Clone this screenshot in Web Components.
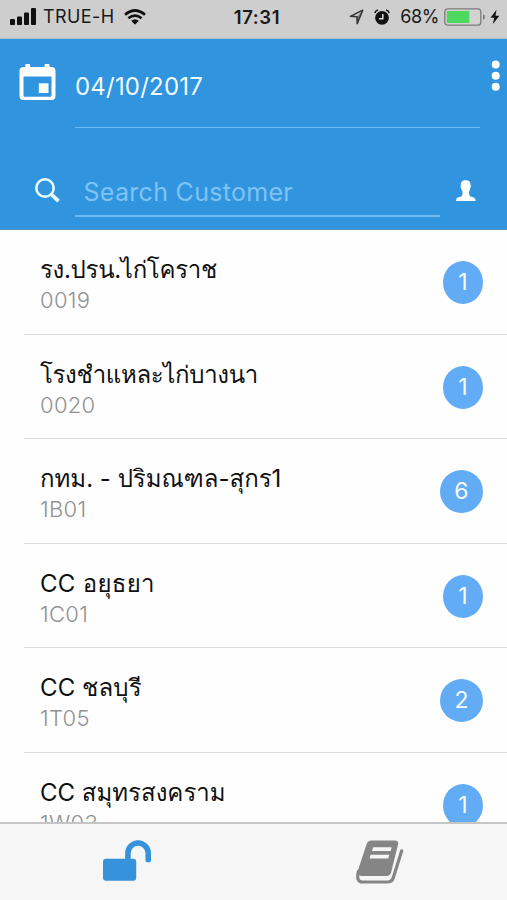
<!DOCTYPE html>
<html lang="th">
<head>
<meta charset="utf-8">
<meta name="viewport" content="width=device-width, initial-scale=1">
<title>Customers</title>
<style>
   body {
      margin: 0;
      background: #fefefe;
      font-family: Inter, Loma, Garuda, Waree, "Noto Sans Thai Looped", "Noto Sans Thai", "Noto Sans", "Liberation Sans", sans-serif;
   }
</style>
</head>
<body>
<customer-app>
   <status-bar slot="status" carrier="TRUE-H" time="17:31" battery="68"></status-bar>
   <search-header slot="header" date="04/10/2017" placeholder="Search Customer"></search-header>
   <customer-row code="0019" count="1" spacing="-.3">รง.ปรน.ไก่โคราช</customer-row>
   <customer-row code="0020" count="1" spacing="-.35">โรงชำแหละไก่บางนา</customer-row>
   <customer-row code="1B01" count="6" spacing="0">กทม. - ปริมณฑล-สุกร1</customer-row>
   <customer-row code="1C01" count="1" spacing=".3">CC อยุธยา</customer-row>
   <customer-row code="1T05" count="2" spacing=".1">CC ชลบุรี</customer-row>
   <customer-row code="1W03" count="1" spacing="0">CC สมุทรสงคราม</customer-row>
   <tab-bar slot="tabs"></tab-bar>
</customer-app>

<script>
class CustomerApp extends HTMLElement {
   constructor () {
      super();
      this.attachShadow( { mode: 'open' } )
   }

   connectedCallback () {
      this.shadowRoot.innerHTML = `
         <style>
            :host {
               display: flex;
               flex-direction: column;
               height: 900px;
               overflow: hidden;
            }

            .list {
               flex: 1;
               min-height: 0;
               overflow: hidden;
            }
         </style>
         <slot name="status"></slot>
         <slot name="header"></slot>
         <main class="list"><slot></slot></main>
         <slot name="tabs"></slot>
      `;
   }
}

class StatusBar extends HTMLElement {
   constructor () {
      super();
      this.attachShadow( { mode: 'open' } )
   }

   connectedCallback () {
      this.shadowRoot.innerHTML = `
         <style>
            :host {
               display: grid;
               grid-template-columns: 1fr auto 1fr;
               align-items: center;
               box-sizing: border-box;
               height: 39px;
               padding: 0 7px 5px 10px;
               background: #cecece;
               border-bottom: 1px solid #a9bfcc;
               color: #191919;
               font-size: 18px;
               line-height: 22px;
            }

            svg { display: block; flex: none; }

            .side { display: flex; align-items: center; }
            .carrier { margin: 0 10px 0 7px; letter-spacing: .4px; }
            .time { margin-left: 4px; font-weight: 600; font-size: 18.500px; letter-spacing: .6px; }
            .right { justify-content: flex-end; }
            .percent { margin: 0 5px 0 10px; letter-spacing: -.4px; }
         </style>
         <div class="side">
            <svg width="26" height="17" viewBox="0 0 26 17" fill="#111">
               <rect x="0" y="11" width="5" height="6" rx="1"/>
               <rect x="7" y="8.500" width="5" height="8.500" rx="1"/>
               <rect x="14" y="4.500" width="5" height="12.500" rx="1"/>
               <rect x="21" y="0" width="5" height="17" rx="1"/>
            </svg>
            <span class="carrier">${this.getAttribute('carrier')}</span>
            <svg width="22" height="16" viewBox="0 0 22 16" fill="none" stroke="#111" stroke-width="2.700">
               <path d="M1 5.700Q11-2.700 21 5.700M4.400 9.300Q11 3.900 17.600 9.300"/>
               <path d="M7.200 11.800Q11 8.600 14.800 11.800L11 15.700z" fill="#111" stroke="none"/>
            </svg>
         </div>
         <span class="time">${this.getAttribute('time')}</span>
         <div class="side right">
            <svg width="15" height="16" viewBox="0 0 15 16" fill="none" stroke="#333" stroke-width="1.500">
               <path d="M13.700 1.200 1.500 7.300 8 7.800 8.200 14.700z" stroke-linejoin="round"/>
               <path d="M13.700 1.200 8 7.800 8.200 14.700z" fill="#333" stroke="none" opacity=".5"/>
            </svg>
            <svg width="16" height="16" viewBox="0 0 16 16" style="margin-left:10px">
               <circle cx="8" cy="8.800" r="6.900" fill="#111"/>
               <path d="M.8 4Q1.500 1.700 4 .9M15.200 4Q14.500 1.700 12 .9" fill="none" stroke="#111" stroke-width="1.500"/>
               <path d="M8.800 5v4.700H5" fill="none" stroke="#ddd" stroke-width="1.500"/>
            </svg>
            <span class="percent">${this.getAttribute('battery')}%</span>
            <svg width="42" height="18" viewBox="0 0 42 18">
               <rect x=".8" y=".8" width="36" height="16.400" rx="3" fill="#d2d2d2" stroke="#7c7c7c" stroke-width="1.300"/>
               <rect x="2.800" y="3" width="22.500" height="12" rx=".8" fill="#4cd95e"/>
               <path d="M39 6.200q2 .5 2 2.800t-2 2.800z" fill="#7c7c7c"/>
            </svg>
            <svg width="10" height="16" viewBox="0 0 10 16" style="margin-left:4px">
               <path d="M6.500.8.500 8.700h3.800L2.700 15.200 9.400 6.700H5.500z" fill="#111"/>
            </svg>
         </div>
      `;
   }
}

class SearchHeader extends HTMLElement {
   constructor () {
      super();
      this.attachShadow( { mode: 'open' } )
   }

   connectedCallback () {
      this.shadowRoot.innerHTML = `
         <style>
            :host {
               display: block;
               box-sizing: border-box;
               height: 191px;
               background: #3094df;
               border-bottom: 1px solid #5f92b8;
               color: #f0faff;
            }

            svg { display: block; flex: none; }

            .date {
               display: grid;
               grid-template-columns: 75px 405px 1fr;
               height: 89px;
            }

            .date__icon { padding: 25px 0 0 19px; }

            .date__value {
               box-sizing: border-box;
               padding-top: 33px;
               border-bottom: 1px solid #6dbaf2;
               font-size: 24px;
               letter-spacing: .2px;
               line-height: 30px;
            }

            .date__value span, .search__field span {
               display: inline-block;
               white-space: nowrap;
            }

            .date__menu { padding: 21px 0 0 11px; }

            .search {
               display: grid;
               grid-template-columns: 75px 365px 1fr;
               height: 89px;
            }

            .search__icon { padding: 50px 0 0 35px; }

            .search__field {
               box-sizing: border-box;
               padding: 49px 0 0 8.500px;
               border-bottom: 2px solid #6dbaf2;
               color: #7fc3f5;
               font-size: 25px;
               letter-spacing: .3px;
               line-height: 30px;
            }

            .search__person { padding: 52px 0 0 16px; }
         </style>
         <div class="date">
            <div class="date__icon">
               <svg width="37" height="37" viewBox="0 0 37 37" fill="#fff">
                  <path fill-rule="evenodd" d="M4.500 3H6.200V1.200Q6.200 0 7.400 0h2.600Q11.200 0 11.200 1.200V3h14.300V1.200Q25.500 0 26.700 0h2.600Q30.500 0 30.500 1.200V3h2q4 0 4 4v25q0 4-4 4h-28q-4 0-4-4V7q0-4 4-4zM4.500 12.500v19q0 1.300 1.300 1.300h25.400q1.300 0 1.300-1.300v-19z"/>
                  <rect x="19.800" y="19.300" width="9.700" height="9.700"/>
               </svg>
            </div>
            <div class="date__value"><span>${this.getAttribute('date')}</span></div>
            <div class="date__menu">
               <svg width="9" height="32" viewBox="0 0 9 32" fill="#fff">
                  <circle cx="4.700" cy="4.500" r="4"/>
                  <circle cx="4.700" cy="15.700" r="4"/>
                  <circle cx="4.700" cy="26.800" r="4"/>
               </svg>
            </div>
         </div>
         <div class="search">
            <div class="search__icon">
               <svg width="26" height="26" viewBox="0 0 26 26" fill="none" stroke="#ecffff">
                  <circle cx="10" cy="10" r="8.700" stroke-width="2.500"/>
                  <path d="M16.200 16.200 23.500 23.200" stroke-width="3.700"/>
               </svg>
            </div>
            <div class="search__field"><span>${this.getAttribute('placeholder')}</span></div>
            <div class="search__person">
               <svg width="20" height="22" viewBox="0 0 20 22" fill="#fff">
                  <path d="M9.700.3C13 .3 14.800 2 14.500 5.300c.6.300.5 2-.2 2.700-.2 1.500-.7 2.500-1.100 3.200-.4 2 .1 4.600 1.200 5.300 3 .8 5.200 1 5.300 4.400H0c0-3.400 2.300-3.600 5.300-4.400 1.100-.7 1.500-3.300 1.100-5.300C5.800 10.500 5.300 9.500 5.100 8c-.7-.7-.8-2.400-.2-2.700C4.600 2 6.400.3 9.700.3z"/>
               </svg>
            </div>
         </div>
      `;
   }
}

class CustomerRow extends HTMLElement {
   constructor () {
      super();
      this.attachShadow( { mode: 'open' } )
   }

   connectedCallback () {
      const count = this.getAttribute('count');
      // a "1" is narrower, so its badge is narrower too
      const badgeWidth = count === '1' ? 40 : 43;

      this.shadowRoot.innerHTML = `
         <style>
            :host {
               display: flex;
               justify-content: space-between;
               box-sizing: border-box;
               height: 104.500px;
               margin-left: 24px;
               padding: 24px 24px 0 16px;
               border-bottom: 1.500px solid #dcdcdc;
            }

            .name {
               margin: 0;
               height: 32px;
               color: #101010;
               font-size: 24px;
               font-weight: 400;
               letter-spacing: ${this.getAttribute('spacing')}px;
               line-height: 32px;
               white-space: nowrap;
            }

            .code {
               margin: 0;
               color: #929292;
               font-size: 22px;
               font-weight: 300;
               letter-spacing: .3px;
               line-height: 29px;
            }

            .badge {
               box-sizing: border-box;
               width: ${badgeWidth}px;
               height: 43px;
               margin-top: 7px;
               border-radius: 50%;
               background: #62acf5;
               color: #f4fbff;
               font-size: 23px;
               line-height: 42px;
               text-align: center;
            }
         </style>
         <div class="info">
            <p class="name"><slot></slot></p>
            <p class="code">${this.getAttribute('code')}</p>
         </div>
         <div class="badge">${count}</div>
      `;
   }
}

class TabBar extends HTMLElement {
   constructor () {
      super();
      this.attachShadow( { mode: 'open' } )
   }

   connectedCallback () {
      this.shadowRoot.innerHTML = `
         <style>
            :host {
               display: grid;
               grid-template-columns: 1fr 1fr;
               justify-items: center;
               box-sizing: border-box;
               height: 78px;
               padding-top: 16px;
               background: #f6f6f6;
               border-top: 2px solid #c6c6c6;
            }

            svg { display: block; }
         </style>
         <svg width="48" height="41" viewBox="0 128 1664 1408" fill="#3592db">
            <path d="M1664 576v256q0 26-19 45t-45 19h-64q-26 0-45-19t-19-45v-256q0-106-75-181t-181-75-181 75-75 181v192h96q40 0 68 28t28 68v576q0 40-28 68t-68 28h-960q-40 0-68-28t-28-68v-576q0-40 28-68t68-28h672v-192q0-185 131.500-316.500t316.500-131.500 316.500 131.500 131.500 316.500z"/>
         </svg>
         <svg width="48" height="44" viewBox="0 0 48 44">
            <path d="M15.500.5h23q4.500 0 3.500 4L35.200 32q-1 4-5 4H6.500Q1.300 36 1.400 32L10.500 4.500Q11.700.5 15.500.5z" fill="#858585"/>
            <path d="M2.400 31.500Q-.2 42 6.500 42h25q4.500 0 5.800-4.200L45.700 10.800" fill="none" stroke="#858585" stroke-width="3.200" stroke-linecap="round"/>
            <path d="M17.200 7.300h18.500L34.700 11H16zM14.700 14.800h18.600L32.300 18.500H13.500z" fill="#f6f6f6"/>
         </svg>
      `;
   }
}

customElements.define("customer-app", CustomerApp);
customElements.define("status-bar", StatusBar);
customElements.define("search-header", SearchHeader);
customElements.define("customer-row", CustomerRow);
customElements.define("tab-bar", TabBar);
</script>
</body>
</html>
